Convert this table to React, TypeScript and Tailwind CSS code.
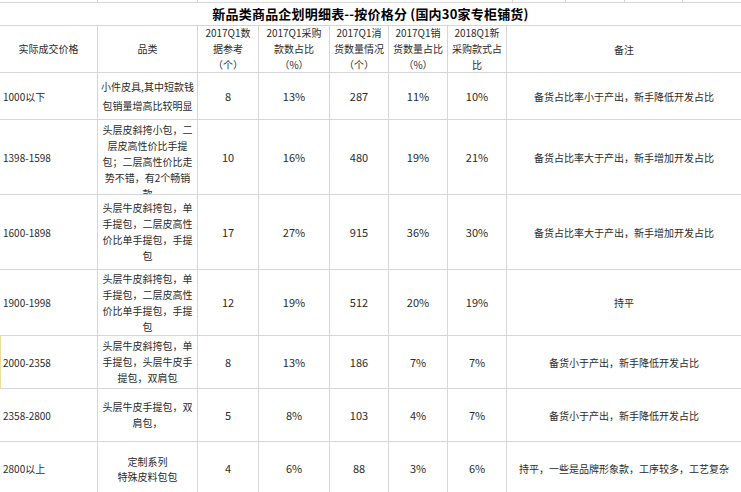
import React from "react";

type Row = {
  price: string;
  cat: string[];
  catLeading?: string;
  catAlign?: string;
  h: string;
  ref: string;
  buy: string;
  qty: string;
  sale: string;
  next: string;
  note: string;
  edge?: boolean;
};

const ROWS: Row[] = [
  { price: "1000以下", cat: ["小件皮具,其中短款钱", "包销量增高比较明显"], catLeading: "leading-[19px]", h: "h-[47px]", ref: "8", buy: "13%", qty: "287", sale: "11%", next: "10%", note: "备货占比率小于产出，新手降低开发占比" },
  { price: "1398-1598", cat: ["头层皮斜挎小包，二", "层皮高性价比手提", "包；二层高性价比走", "势不错，有2个畅销", "款"], catAlign: "justify-start pt-[2px]", h: "h-[75px]", ref: "10", buy: "16%", qty: "480", sale: "19%", next: "21%", note: "备货占比率大于产出，新手增加开发占比" },
  { price: "1600-1898", cat: ["头层牛皮斜挎包，单", "手提包，二层皮高性", "价比单手提包，手提", "包"], h: "h-[75px]", ref: "17", buy: "27%", qty: "915", sale: "36%", next: "30%", note: "备货占比率大于产出，新手增加开发占比" },
  { price: "1900-1998", cat: ["头层牛皮斜挎包，单", "手提包，二层皮高性", "价比单手提包，手提", "包"], h: "h-[66px]", ref: "12", buy: "19%", qty: "512", sale: "20%", next: "19%", note: "持平" },
  { price: "2000-2358", cat: ["头层牛皮斜挎包，单", "手提包，头层牛皮手", "提包，双肩包"], h: "h-[53px]", ref: "8", buy: "13%", qty: "186", sale: "7%", next: "7%", note: "备货小于产出，新手降低开发占比", edge: true },
  { price: "2358-2800", cat: ["头层牛皮手提包，双", "肩包，"], h: "h-[53px]", ref: "5", buy: "8%", qty: "103", sale: "4%", next: "7%", note: "备货小于产出，新手降低开发占比" },
  { price: "2800以上", cat: ["定制系列", "特殊皮料包包"], catLeading: "leading-[15px]", h: "h-[54px]", ref: "4", buy: "6%", qty: "88", sale: "3%", next: "6%", note: "持平，一些是品牌形象款，工序较多，工艺复杂" },
];

const cell = "border-r border-b border-[#d6d6d6] flex items-center justify-center text-center overflow-hidden";

function Head({ lines, w }: { lines: string[]; w: string }) {
  return (
    <div className={`${cell} ${w} flex-col leading-[16px] whitespace-nowrap`}>
      {lines.map((l, i) => <span key={i}>{l}</span>)}
    </div>
  );
}

export default function App() {
  return (
    <div className="w-[741px] h-[492px] overflow-hidden bg-white text-[#2b2b2b] text-[10px] font-['Noto_Sans_CJK_SC','Noto_Sans',sans-serif]">
      {/* sliver of the row above */}
      <div className="flex h-[3px]">
        <div className="w-[98px] border-r border-b border-[#d6d6d6]" />
        <div className="w-[100px] border-r border-b border-[#d6d6d6]" />
        <div className="w-[315px] border-r border-b border-[#d6d6d6]" />
        <div className="w-[53px] border-r border-b border-[#d6d6d6]" />
        <div className="w-[59px] border-r border-b border-[#d6d6d6]" />
        <div className="w-[58px] border-r border-b border-[#d6d6d6]" />
        <div className="flex-1 border-b border-[#d6d6d6]" />
      </div>

      <div className="h-[23px] flex items-center justify-center border-b border-[#d6d6d6] text-[13px] font-bold text-black tracking-[0.2px]">
        新品类商品企划明细表--按价格分 (国内30家专柜铺货)
      </div>

      <div className="flex h-[47px]">
        <Head w="w-[98px]" lines={["实际成交价格"]} />
        <Head w="w-[100px]" lines={["品类"]} />
        <Head w="w-[61px]" lines={["2017Q1数", "据参考", "（个）"]} />
        <Head w="w-[71px]" lines={["2017Q1采购", "款数占比", "（%）"]} />
        <Head w="w-[59px]" lines={["2017Q1消", "货数量情况", "（个）"]} />
        <Head w="w-[59px]" lines={["2017Q1销", "货数量占比", "（%）"]} />
        <Head w="w-[59px]" lines={["2018Q1新", "采购款式占", "比"]} />
        <div className={`${cell} flex-1 border-r-0`}>备注</div>
      </div>

      {ROWS.map((r) => (
        <div key={r.price} className={`flex ${r.h}`}>
          <div className={`${cell} w-[98px] justify-start ${r.edge ? "border-l border-l-[#f0dc9a] pl-[2px]" : "pl-[3px]"}`}>{r.price}</div>
          <div className={`${cell} w-[100px] flex-col whitespace-nowrap ${r.catLeading ?? "leading-[16px]"} ${r.catAlign ?? ""}`}>
            {r.cat.map((l, i) => <span key={i}>{l}</span>)}
          </div>
          <div className={`${cell} w-[61px] text-[11px]`}>{r.ref}</div>
          <div className={`${cell} w-[71px] text-[11px]`}>{r.buy}</div>
          <div className={`${cell} w-[59px] text-[11px]`}>{r.qty}</div>
          <div className={`${cell} w-[59px] text-[11px]`}>{r.sale}</div>
          <div className={`${cell} w-[59px] text-[11px]`}>{r.next}</div>
          <div className={`${cell} flex-1 border-r-0 whitespace-nowrap`}>{r.note}</div>
        </div>
      ))}
    </div>
  );
}
